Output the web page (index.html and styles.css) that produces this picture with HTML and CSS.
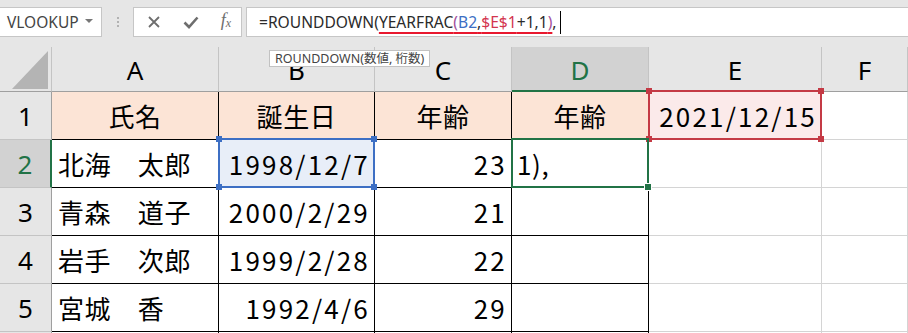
FILE: index.html
```html
<!DOCTYPE html>
<html lang="ja">

<head>
  <meta charset="UTF-8" />
  <title>ROUNDDOWN - YEARFRAC</title>
  <link rel="stylesheet" href="styles.css">
</head>

<body>
  <div class="formula-bar">
    <div class="name-box">
      <span>VLOOKUP</span>
      <span class="caret"></span>
    </div>
    <div class="grip"><i></i><i></i><i></i></div>
    <div class="fx-box">
      <svg class="icon" width="14" height="14" viewBox="0 0 14 14">
        <path d="M2 2 L12 12 M12 2 L2 12" stroke="#6e6e6e" stroke-width="1.8" fill="none" />
      </svg>
      <svg class="icon" width="16" height="14" viewBox="0 0 16 14">
        <path d="M1.5 7.5 L6 12 L14.5 2.5" stroke="#6e6e6e" stroke-width="2.6" fill="none" />
      </svg>
      <span class="fx">f<sub>x</sub></span>
    </div>
    <div class="formula-input">
      <span class="ink">=ROUNDDOWN(</span><span class="ref-line"><span class="ink">YEARFRAC</span><span class="paren">(</span><span class="ref-blue">B2</span><span class="ink">,</span><span class="ref-red">$E$1</span><span class="ink">+1,1</span><span class="paren">)</span></span><span class="ink">,</span><span class="cursor"></span>
    </div>
  </div>

  <div class="sheet">
    <!-- column headers -->
    <div class="hd corner">
      <svg width="36" height="38" viewBox="0 0 36 38"><polygon points="36,0 36,38 0,38" fill="#b4b4b4" /></svg>
    </div>
    <div class="hd">A</div>
    <div class="hd">B</div>
    <div class="hd">C</div>
    <div class="hd hd-active">D</div>
    <div class="hd">E</div>
    <div class="hd">F</div>

    <!-- row 1 -->
    <div class="rh">1</div>
    <div class="cell b title center">氏名</div>
    <div class="cell b title center">誕生日</div>
    <div class="cell b title center">年齢</div>
    <div class="cell b title center">年齢</div>
    <div class="cell right num ref-e">2021/12/15</div>
    <div class="cell"></div>

    <!-- row 2 -->
    <div class="rh rh-active">2</div>
    <div class="cell b">北海　太郎</div>
    <div class="cell b right num ref-b">1998/12/7</div>
    <div class="cell b right num">23</div>
    <div class="cell b active">1),</div>
    <div class="cell"></div>
    <div class="cell"></div>

    <!-- row 3 -->
    <div class="rh">3</div>
    <div class="cell b">青森　道子</div>
    <div class="cell b right num">2000/2/29</div>
    <div class="cell b right num">21</div>
    <div class="cell b"></div>
    <div class="cell"></div>
    <div class="cell"></div>

    <!-- row 4 -->
    <div class="rh">4</div>
    <div class="cell b">岩手　次郎</div>
    <div class="cell b right num">1999/2/28</div>
    <div class="cell b right num">22</div>
    <div class="cell b"></div>
    <div class="cell"></div>
    <div class="cell"></div>

    <!-- row 5 -->
    <div class="rh">5</div>
    <div class="cell b">宮城　香</div>
    <div class="cell b right num">1992/4/6</div>
    <div class="cell b right num">29</div>
    <div class="cell b"></div>
    <div class="cell"></div>
    <div class="cell"></div>

    <!-- row 6 (cut off by the window) -->
    <div class="rh"></div>
    <div class="cell b"></div>
    <div class="cell b"></div>
    <div class="cell b"></div>
    <div class="cell b"></div>
    <div class="cell"></div>
    <div class="cell"></div>
  </div>

  <div class="tooltip">ROUNDDOWN(数値, 桁数)</div>
</body>

</html>
```

FILE: styles.css
```css
body {
  margin: 0;
  background: #ffffff;
  font-family: "Noto Sans CJK JP", "Noto Sans", sans-serif;
  color: #000;
  overflow: hidden;
  height: 333px;
  position: relative;
}

/* formula bar */
.formula-bar {
  display: flex;
  align-items: flex-start;
  height: 47px;
  padding-top: 7px;
  box-sizing: border-box;
  background: #e6e6e6;
}

.name-box,
.fx-box,
.formula-input {
  height: 30px;
  box-sizing: border-box;
  background: #fff;
  border: 1px solid #c6c6c6;
  display: flex;
  align-items: center;
}

.name-box {
  width: 102px;
  border-left: none;
  padding: 0 0 0 7px;
  justify-content: space-between;
  font-family: "Noto Sans", sans-serif;
  font-size: 15.5px;
  color: #444;
}

.caret {
  width: 0;
  height: 0;
  border-left: 4px solid transparent;
  border-right: 4px solid transparent;
  border-top: 4px solid #777;
  margin-right: 8px;
  margin-top: -2px;
}

.grip {
  width: 31px;
  height: 30px;
  display: flex;
  flex-direction: column;
  align-items: center;
  justify-content: center;
  gap: 2px;
}

.grip i {
  display: block;
  width: 2px;
  height: 2px;
  background: #b2b2b2;
}

.fx-box {
  width: 109px;
  padding: 0 10px 0 13px;
  justify-content: space-between;
}

.fx {
  font-family: "Liberation Serif", serif;
  font-style: italic;
  font-size: 18px;
  color: #6e6e6e;
  margin-top: -4px;
}

.fx sub {
  font-size: 12px;
  vertical-align: -1px;
}

.formula-input {
  flex: 1;
  margin-left: 4px;
  border-right: none;
  padding-left: 12px;
  font-family: "Noto Sans", sans-serif;
  font-size: 15.6px;
  white-space: pre;
}

.ink { color: #2b2b2b; }
.paren { color: #a2509c; }
.ref-blue { color: #3d6fc4; }
.ref-red { color: #d3354f; }

.ref-line {
  text-decoration: underline;
  text-decoration-color: #e8182e;
  text-decoration-thickness: 2px;
  text-underline-offset: 4px;
}

.cursor {
  display: inline-block;
  width: 1px;
  height: 23px;
  background: #000;
  margin-left: 3px;
}

/* sheet grid */
.sheet {
  display: grid;
  grid-template-columns: 52px 167px 156px 137px 137px 173px 1fr;
  grid-template-rows: 45px repeat(6, 48px);
  font-size: 26px;
  line-height: 1;
}

.hd,
.rh,
.cell {
  box-sizing: border-box;
  display: flex;
  align-items: center;
  border-right: 1px solid #d4d4d4;
  border-bottom: 1px solid #d4d4d4;
  position: relative;
}

.hd {
  background: #e6e6e6;
  justify-content: center;
  font-family: "Noto Sans", sans-serif;
  font-size: 26px;
  border-right-color: #c4c4c4;
  border-bottom-color: #9f9f9f;
  padding-top: 2px;
}

.hd.corner {
  align-items: flex-end;
  justify-content: flex-end;
  padding: 0 3px 2px 0;
}

.hd-active {
  background: #d2d2d2;
  color: #217346;
  border-bottom: 2px solid #217346;
}

.rh {
  background: #e6e6e6;
  justify-content: center;
  font-family: "Noto Sans", sans-serif;
  border-right-color: #9f9f9f;
  border-bottom-color: #c4c4c4;
}

.rh-active {
  background: #d2d2d2;
  color: #217346;
  border-right: 2px solid #217346;
}

.cell {
  padding: 0 6px;
  white-space: pre;
  letter-spacing: 0.6px;
}

.cell.num {
  letter-spacing: 2.2px;
  padding-right: 4px;
}

.cell.b {
  border-right-color: #000;
  border-bottom-color: #000;
}

.title {
  background: #fce4d6;
}

.center { justify-content: center; }
.right { justify-content: flex-end; }

/* formula reference highlights */
.ref-b {
  background: #e8eef8;
}

.ref-b::after,
.ref-e::after,
.active::after {
  content: "";
  position: absolute;
  top: -2px;
  left: -1px;
  right: -1px;
  bottom: -1px;
  border: 2px solid #3d6fc4;
  pointer-events: none;
}

.ref-b::before,
.ref-e::before {
  content: "";
  position: absolute;
  inset: -4px -3px -3px -3px;
  background:
    linear-gradient(#3d6fc4, #3d6fc4) left top / 6px 6px no-repeat,
    linear-gradient(#3d6fc4, #3d6fc4) right top / 6px 6px no-repeat,
    linear-gradient(#3d6fc4, #3d6fc4) left bottom / 6px 6px no-repeat,
    linear-gradient(#3d6fc4, #3d6fc4) right bottom / 6px 6px no-repeat;
  z-index: 2;
}

.ref-e {
  background: #fbeaea;
}

.ref-e::after {
  border-color: #c43a45;
}

.ref-e::before {
  background:
    linear-gradient(#c43a45, #c43a45) left top / 6px 6px no-repeat,
    linear-gradient(#c43a45, #c43a45) right top / 6px 6px no-repeat,
    linear-gradient(#c43a45, #c43a45) left bottom / 6px 6px no-repeat,
    linear-gradient(#c43a45, #c43a45) right bottom / 6px 6px no-repeat;
}

.active {
  padding-left: 5px;
}

.active::after {
  border-color: #217346;
  z-index: 2;
}

.active::before {
  content: "";
  position: absolute;
  right: -4px;
  bottom: -4px;
  width: 6px;
  height: 6px;
  background: #217346;
  border: 1px solid #fff;
  z-index: 3;
}

/* function tooltip */
.tooltip {
  position: absolute;
  left: 269px;
  top: 50px;
  height: 17px;
  box-sizing: border-box;
  padding: 0 5px;
  background: #fff;
  border: 1px solid #c2c2c2;
  font-family: "Noto Sans", "Noto Sans CJK JP", sans-serif;
  font-size: 12.5px;
  line-height: 15px;
  color: #444;
  white-space: pre;
}
```
